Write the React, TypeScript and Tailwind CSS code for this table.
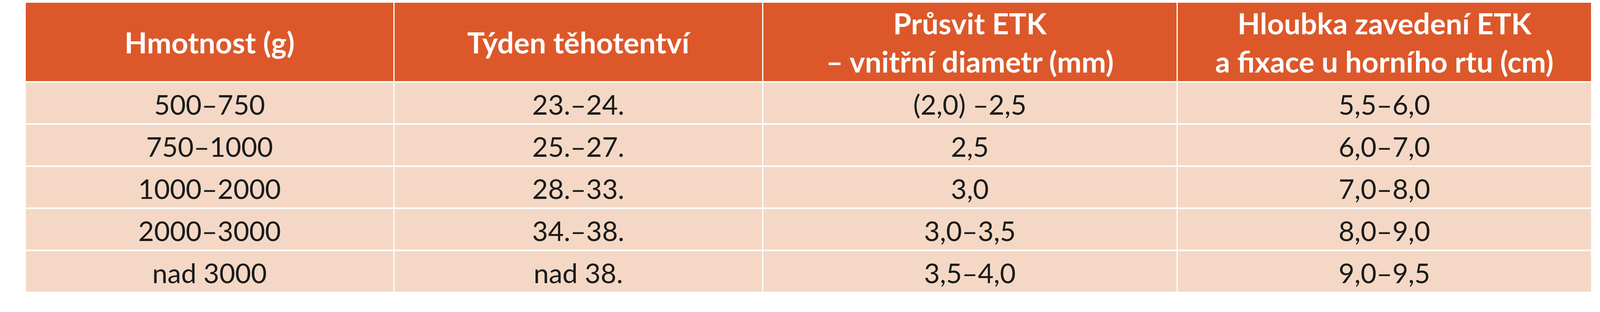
const headers = [
  ['Hmotnost (g)'],
  ['Týden těhotentví'],
  ['Průsvit ETK', '– vnitřní diametr (mm)'],
  ['Hloubka zavedení ETK', 'a fixace u horního rtu (cm)'],
];

const rows = [
  ['500–750', '23.–24.', '(2,0) –2,5', '5,5–6,0'],
  ['750–1000', '25.–27.', '2,5', '6,0–7,0'],
  ['1000–2000', '28.–33.', '3,0', '7,0–8,0'],
  ['2000–3000', '34.–38.', '3,0–3,5', '8,0–9,0'],
  ['nad 3000', 'nad 38.', '3,5–4,0', '9,0–9,5'],
];

// widths are in viewport units so the table keeps the reference proportions at any window width
const App = () => {
  return (
    <div className="h-[800px] w-full bg-white pt-[7px] pl-[1.62vw] font-['Lato','Noto_Sans',sans-serif]">
      <div className="grid w-[97.83vw] grid-cols-[993fr_994fr_1117fr_1118fr] grid-rows-[201px_repeat(5,104px)] gap-x-[3px] gap-y-[4px]">
        {headers.map((lines, i) => (
          <div
            key={i}
            className="flex flex-col items-center justify-center bg-[#dc582a] text-center text-[75px] font-bold leading-[98px] text-white"
          >
            {lines.map((line) => (
              <span key={line} className="whitespace-nowrap">
                {line}
              </span>
            ))}
          </div>
        ))}
        {rows.map((row, r) =>
          row.map((cell, c) => (
            <div
              key={`${r}-${c}`}
              className="flex items-center justify-center bg-[#f4d8c5] pt-[6px] text-[70px] leading-none whitespace-nowrap text-[#1a1a1a]"
            >
              {cell}
            </div>
          ))
        )}
      </div>
    </div>
  );
};

export default App;
